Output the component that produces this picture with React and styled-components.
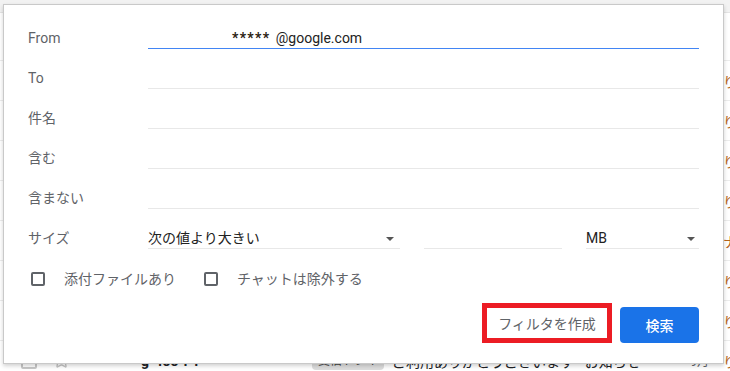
import React from 'react'
import styled, { createGlobalStyle } from 'styled-components'
import { Star } from 'lucide-react'

const GlobalStyle = createGlobalStyle`
  html, body {
    margin: 0;
    padding: 0;
    background: #fff;
  }
  body {
    font-family: Roboto, "Noto Sans CJK JP", sans-serif;
    overflow: hidden;
  }
`

const Page = styled.div`
  position: relative;
  width: 730px;
  height: 371px;
  overflow: hidden;
  background: #fff;
`

const TopBar = styled.div`
  height: 12px;
  background: #f2f2f2;
  border-bottom: 1px solid #e4e4e4;
`

const MailRow = styled.div`
  height: ${p => (p.$tall ? 47 : 39)}px;
  border-bottom: 1px solid #ececec;
  display: flex;
  align-items: center;
  padding-left: 21px;
  overflow: hidden;
  font-size: 14px;
  white-space: nowrap;
`

const MailCheck = styled.span`
  width: 16px;
  height: 16px;
  box-sizing: border-box;
  border: 2px solid #c8c8c8;
  border-radius: 2px;
  flex: none;
`

const StarWrap = styled.span`
  display: flex;
  margin-left: 16px;
  color: #c4c4c4;
`

const Marker = styled.span`
  width: 11px;
  height: 3px;
  margin-left: 18px;
  background: #c8c8c8;
  flex: none;
`

const Sender = styled.span`
  margin-left: 42px;
  width: 172px;
  font-weight: 700;
  color: #202124;
`

const Chip = styled.span`
  padding: 0 6px;
  height: 18px;
  line-height: 18px;
  border-radius: 4px;
  background: #dddddd;
  font-size: 12px;
  color: #444;
  flex: none;
`

const Subject = styled.span`
  margin-left: 8px;
  width: 300px;
  color: #202124;
`

const Time = styled.span`
  margin-left: auto;
  font-size: 12px;
  color: #5f6368;
`

const Tail = styled.span`
  margin-left: 14px;
  margin-right: -7px;
  color: #b5651d;
  visibility: ${p => (p.$hidden ? 'hidden' : 'visible')};
`

const Panel = styled.div`
  position: absolute;
  left: 3px;
  top: 4px;
  width: 721px;
  height: 360px;
  box-sizing: border-box;
  background: #fff;
  border: 1px solid #c9c9c9;
  box-shadow: 0 2px 4px rgba(0, 0, 0, 0.18);
  padding: 4px 24px 0 24px;
  display: flex;
  flex-direction: column;
`

const FieldRow = styled.div`
  display: grid;
  grid-template-columns: 120px 1fr;
  align-items: end;
  height: 40px;
`

const Label = styled.div`
  font-size: 14px;
  line-height: 20px;
  color: #5f6368;
  margin-bottom: 1px;
`

const Field = styled.div`
  height: 20px;
  line-height: 20px;
  font-size: 14px;
  color: #222;
  border-bottom: 1px solid ${p => (p.$focused ? '#4285f4' : '#e8e8e8')};
  padding-left: ${p => p.$indent || 0}px;
`

const Masked = styled.span`
  font-weight: 700;
  color: #2a2010;
  letter-spacing: 1.3px;
  margin-right: 2px;
`

const SizeGroup = styled.div`
  display: grid;
  grid-template-columns: 252px 138px 113px;
  column-gap: 24px;
  align-items: end;
`

const Select = styled.div`
  display: flex;
  align-items: center;
  justify-content: space-between;
  height: 20px;
  line-height: 20px;
  font-size: 14px;
  color: #222;
  border-bottom: 1px solid #e8e8e8;
  padding-right: ${p => p.$arrowGap || 6}px;
`

const Arrow = styled.span`
  width: 0;
  height: 0;
  border-left: 4px solid transparent;
  border-right: 4px solid transparent;
  border-top: 4px solid #555;
  margin-top: 2px;
`

const Options = styled.div`
  display: flex;
  align-items: center;
  height: 20px;
  margin-top: 20px;
  padding-left: 3px;
  gap: 28px;
`

const CheckItem = styled.label`
  display: flex;
  align-items: center;
  gap: 19px;
  font-size: 14px;
  line-height: 20px;
  color: #5f6368;
`

const Box = styled.span`
  width: 14px;
  height: 14px;
  box-sizing: border-box;
  border: 2px solid #5f6368;
  border-radius: 2px;
`

const Actions = styled.div`
  display: flex;
  justify-content: flex-end;
  align-items: flex-end;
  gap: 8px;
  height: 40px;
  margin-top: 14px;
`

const TextButton = styled.button`
  width: 130px;
  height: 40px;
  box-sizing: border-box;
  border: 5px solid ${p => (p.$marked ? '#ec1c24' : 'transparent')};
  background: #fff;
  color: #5f6368;
  font-family: inherit;
  font-size: 14px;
  padding: 0;
  cursor: pointer;
`

const PrimaryButton = styled.button`
  width: 79px;
  height: 36px;
  border: none;
  border-radius: 4px;
  background: #1a73e8;
  color: #fff;
  font-family: inherit;
  font-size: 14px;
  font-weight: 500;
  cursor: pointer;
`

const rows = Array.from({ length: 9 })

export default function App() {
  return (
    <Page>
      <GlobalStyle />
      <TopBar />
      {rows.map((_, i) => (
        <MailRow key={i} $tall={i === 0}>
          <MailCheck />
          <StarWrap><Star size={17} strokeWidth={2} /></StarWrap>
          <Marker />
          <Sender>g-4oo-r-r</Sender>
          <Chip>受信トレイ</Chip>
          <Subject>ご利用ありがとうございます - お知らせ</Subject>
          <Time>9月</Time>
          <Tail $hidden={i === 0}>{i === 5 ? 'ナ' : 'り'}</Tail>
        </MailRow>
      ))}

      <Panel>
        <FieldRow>
          <Label>From</Label>
          <Field $focused $indent={84}>
            <Masked>*****</Masked> @google.com
          </Field>
        </FieldRow>
        <FieldRow>
          <Label>To</Label>
          <Field />
        </FieldRow>
        <FieldRow>
          <Label>件名</Label>
          <Field />
        </FieldRow>
        <FieldRow>
          <Label>含む</Label>
          <Field />
        </FieldRow>
        <FieldRow>
          <Label>含まない</Label>
          <Field />
        </FieldRow>
        <FieldRow>
          <Label>サイズ</Label>
          <SizeGroup>
            <Select>
              次の値より大きい
              <Arrow />
            </Select>
            <Field />
            <Select $arrowGap={4}>
              MB
              <Arrow />
            </Select>
          </SizeGroup>
        </FieldRow>

        <Options>
          <CheckItem>
            <Box />
            添付ファイルあり
          </CheckItem>
          <CheckItem>
            <Box />
            チャットは除外する
          </CheckItem>
        </Options>

        <Actions>
          <TextButton $marked>フィルタを作成</TextButton>
          <PrimaryButton>検索</PrimaryButton>
        </Actions>
      </Panel>
    </Page>
  )
}
